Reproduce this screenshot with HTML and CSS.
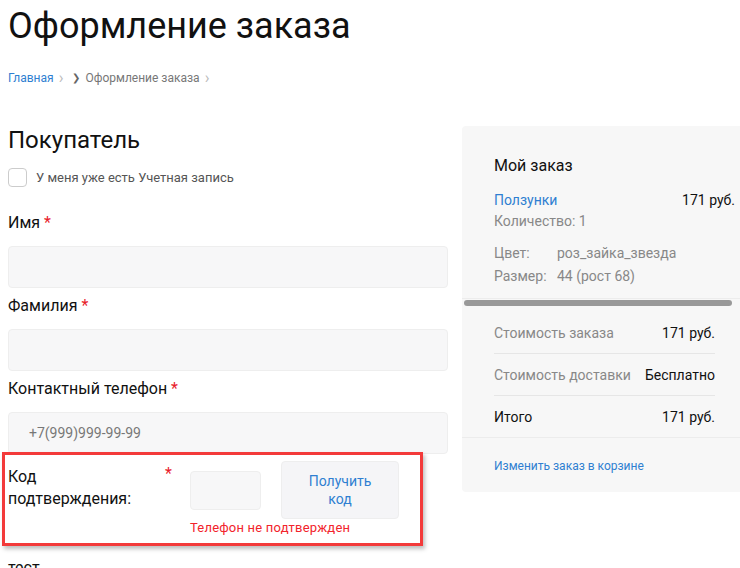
FILE: index.html
```html
<!DOCTYPE html>
<html lang="ru">
<head>
<meta charset="UTF-8">
<meta name="viewport" content="width=device-width, initial-scale=1.0">
<title>Оформление заказа</title>
<link rel="stylesheet" href="styles.css">
</head>
<body>
    <div class="page">
        <h1 class="title">Оформление заказа</h1>
        <div class="crumbs">
            <a href="#">Главная</a>
            <span class="sep">&rsaquo;</span>
            <span class="arrow">&#10095;</span>
            <span>Оформление заказа</span>
            <span class="sep">&rsaquo;</span>
        </div>

        <div class="layout">
            <div class="form">
                <h2 class="section">Покупатель</h2>
                <label class="check"><span class="box"></span>У меня уже есть Учетная запись</label>

                <div class="field">
                    <div class="label">Имя <span class="req">*</span></div>
                    <div class="input"></div>
                </div>
                <div class="field">
                    <div class="label">Фамилия <span class="req">*</span></div>
                    <div class="input"></div>
                </div>
                <div class="field">
                    <div class="label">Контактный телефон <span class="req">*</span></div>
                    <div class="input placeholder">+7(999)999-99-99</div>
                </div>

                <div class="code-row">
                    <div class="code-label">Код<br>подтверждения:</div>
                    <span class="req code-req">*</span>
                    <div class="code-main">
                        <div class="code-controls">
                            <div class="code-input"></div>
                            <button class="code-btn">Получить<br>код</button>
                        </div>
                        <div class="error">Телефон не подтвержден</div>
                    </div>
                </div>

                <div class="label next">тест</div>
            </div>

            <div class="order">
                <div class="order-title">Мой заказ</div>
                <div class="items">
                    <div class="row">
                        <a href="#">Ползунки</a>
                        <span class="dark">171 руб.</span>
                    </div>
                    <div class="muted">Количество: 1</div>
                    <div class="props">
                        <span>Цвет:</span><span>роз_зайка_звезда</span>
                        <span>Размер:</span><span>44 (рост 68)</span>
                    </div>
                </div>
                <div class="scroll"><div class="thumb"></div></div>
                <div class="totals">
                    <div class="row line"><span class="muted">Стоимость заказа</span><span class="dark">171 руб.</span></div>
                    <div class="row line"><span class="muted">Стоимость доставки</span><span class="dark">Бесплатно</span></div>
                    <div class="row"><span class="dark">Итого</span><span class="dark">171 руб.</span></div>
                </div>
                <div class="order-foot"><a href="#">Изменить заказ в корзине</a></div>
            </div>
        </div>
    </div>
</body>
</html>
```

FILE: styles.css
```css
body {
    margin: 0;
    font-family: Roboto, "Noto Sans", sans-serif;
    color: #111;
    background: #fff;
    overflow: hidden;
}
a {
    color: #2f7fd1;
    text-decoration: none;
}
.page {
    padding-left: 8px;
}
.title {
    margin: 0;
    padding-top: 4px;
    font-size: 36px;
    font-weight: 400;
    line-height: 44px;
}
.crumbs {
    margin-top: 22px;
    font-size: 12px;
    line-height: 16px;
    color: #777;
    display: flex;
    align-items: center;
    gap: 5px;
}
.crumbs .sep {
    color: #bbb;
    font-size: 16px;
}
.crumbs .arrow {
    color: #666;
    font-size: 10px;
    margin-left: 4px;
}
.layout {
    display: grid;
    grid-template-columns: 440px 290px;
    gap: 14px;
    margin-top: 38px;
}
.section {
    margin: 0;
    padding-top: 1px;
    font-size: 24px;
    font-weight: 400;
    line-height: 30px;
}
.check {
    display: flex;
    align-items: center;
    gap: 9px;
    margin-top: 13px;
    font-size: 13px;
    color: #555;
}
.box {
    width: 17px;
    height: 17px;
    border: 1px solid #ccc;
    border-radius: 4px;
}
.field {
    margin-top: 23px;
}
.field + .field {
    margin-top: 0;
}
.label {
    font-size: 16px;
    line-height: 24px;
    padding-top: 1px;
}
.req {
    color: #e8202a;
}
.input {
    height: 40px;
    margin-top: 11px;
    margin-bottom: 5px;
    background: #f7f7f8;
    border: 1px solid #eee;
    border-radius: 4px;
    font-size: 14px;
    line-height: 40px;
    padding-left: 20px;
    color: #777;
}
.code-row {
    display: flex;
    margin-left: -6px;
    width: 412px;
    margin-top: -7px;
    padding: 6px 0 8px 3px;
    border: 3px solid #f33a3a;
    box-shadow: 2px 3px 4px rgba(0, 0, 0, 0.25);
    position: relative;
}
.code-label {
    width: 157px;
    font-size: 16px;
    line-height: 22px;
    padding-top: 5px;
}
.code-req {
    width: 25px;
    padding-top: 3px;
    font-size: 16px;
}
.code-controls {
    display: flex;
    gap: 20px;
}
.code-input {
    width: 69px;
    height: 37px;
    margin-top: 10px;
    background: #f7f7f8;
    border: 1px solid #eee;
    border-radius: 4px;
}
.code-btn {
    width: 118px;
    height: 58px;
    background: #f5f5f7;
    border: 1px solid #eee;
    border-radius: 4px;
    font-family: inherit;
    font-size: 14px;
    line-height: 18px;
    color: #2f7fd1;
}
.error {
    margin-top: 2px;
    font-size: 13px;
    line-height: 14px;
    letter-spacing: 0.2px;
    color: #f2232b;
}
.next {
    margin-top: 9px;
}
.order {
    margin-top: 2px;
    background: #f7f7f7;
    border-radius: 4px 0 0 4px;
    height: 366px;
    font-size: 14px;
}
.order-title {
    padding: 29px 0 0 32px;
    font-size: 16px;
    line-height: 22px;
}
.items {
    padding: 13px 17px 10px 32px;
    line-height: 21px;
    border-bottom: 1px solid #ececec;
}
.row {
    display: flex;
    justify-content: space-between;
}
.muted {
    color: #888;
}
.dark {
    color: #111;
}
.props {
    display: grid;
    grid-template-columns: 63px auto;
    margin-top: 10px;
    line-height: 23px;
    color: #888;
}
.scroll {
    padding: 1px 20px 0 2px;
}
.thumb {
    height: 6px;
    border-radius: 3px;
    background: #999;
}
.totals {
    padding: 6px 37px 0 32px;
    border-bottom: 1px solid #ececec;
}
.totals .row {
    line-height: 20px;
    padding: 11px 0 10px;
}
.totals .line {
    border-bottom: 1px solid #e6e6e6;
}
.order-foot {
    padding: 21px 0 0 32px;
    font-size: 12px;
}
```
